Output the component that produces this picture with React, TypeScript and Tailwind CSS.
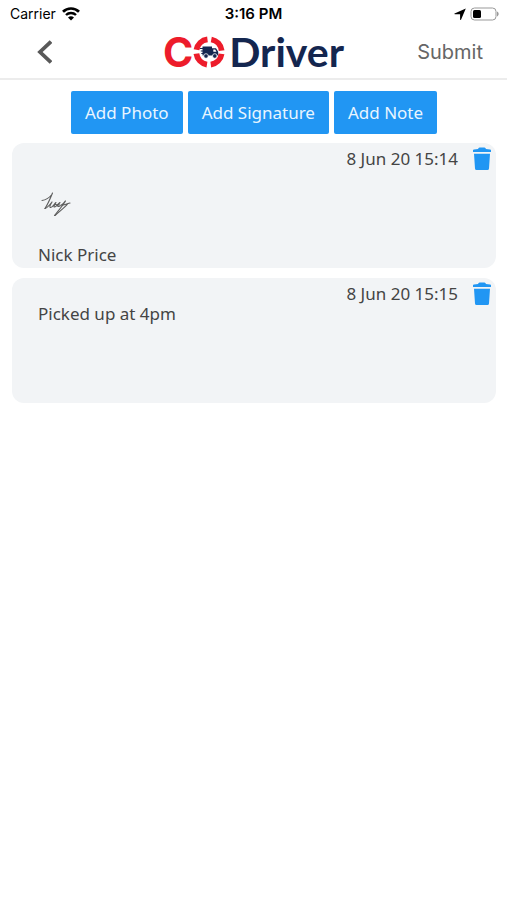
import type { ReactNode } from "react";

interface Entry {
  id: number;
  date: string;
  text: string;
  signed: boolean;
}

const ACTIONS = ["Add Photo", "Add Signature", "Add Note"];

const ENTRIES: Entry[] = [
  { id: 1, date: "8 Jun 20 15:14", text: "Nick Price", signed: true },
  { id: 2, date: "8 Jun 20 15:15", text: "Picked up at 4pm", signed: false },
];

function StatusBar() {
  return (
    <div className="grid h-7 grid-cols-3 items-center px-2 font-['Inter',sans-serif] text-sm text-black">
      <div className="flex items-center gap-1.5 pl-0.5">
        <span>Carrier</span>
        <svg className="h-3.5 w-[18px]" viewBox="0 0 18 14" fill="none">
          <path d="M1 4.8a11.3 11.3 0 0 1 16 0" stroke="#000" strokeWidth="2.7" />
          <path d="M4 8a7.1 7.1 0 0 1 10 0" stroke="#000" strokeWidth="2.4" />
          <path d="M9 13.6 6 10.6a4.3 4.3 0 0 1 6 0z" fill="#000" />
        </svg>
      </div>
      <span className="text-center text-[15px] font-semibold">3:16 PM</span>
      <div className="flex items-center justify-end gap-1">
        <svg className="h-3 w-3" viewBox="0 0 12 12">
          <path d="M11.8.4 7 11.7c-.2.4-.9.3-.9-.2V6.3H.8c-.6 0-.7-.7-.2-.9z" />
        </svg>
        <svg className="h-3.5 w-[29px]" viewBox="0 0 29 14">
          <rect x="1" y="1" width="25" height="12" rx="3.5" fill="none" stroke="#999" />
          <rect x="3" y="3" width="8" height="8" rx="1.5" />
          <path d="M27 4.6c2.2 1 2.2 3.8 0 4.8z" fill="#999" />
        </svg>
      </div>
    </div>
  );
}

function Logo() {
  return (
    <div className="flex items-center text-[41px] leading-10">
      <span className="font-['Inter',sans-serif] font-bold text-[#ed1c2b]">C</span>
      <svg className="h-8 w-8" viewBox="0 0 32 32" fill="none">
        <circle
          cx="16"
          cy="16"
          r="12.7"
          stroke="#ed1c2b"
          strokeWidth="5.8"
          strokeDasharray="16 3.95"
          strokeDashoffset="-1.97"
        />
        <path d="M9.5 10.5H19v9H9.5zM19 12.3h4l2.2 3.5v3.7H19z" fill="#14264f" />
        <path d="M7 12.5h4M7.8 15h3M8.3 17.5h2.5" stroke="#14264f" strokeWidth="1.2" />
        <path d="M20.3 13.6h1.9l1.3 2.2h-3.2z" fill="#fff" />
        <circle cx="13" cy="20" r="2.3" fill="#14264f" stroke="#fff" strokeWidth=".8" />
        <circle cx="21.8" cy="20" r="2.3" fill="#14264f" stroke="#fff" strokeWidth=".8" />
      </svg>
      <span className="ml-1 font-['Lato',sans-serif] font-bold text-[#14264f]">Driver</span>
    </div>
  );
}

function Header() {
  return (
    <header className="grid h-[52px] grid-cols-[1fr_auto_1fr] items-center border-b-2 border-[#ececec] px-6 pb-0.5">
      <button type="button" aria-label="Back" className="justify-self-start px-3">
        <svg className="h-6 w-4" viewBox="0 0 16 24" fill="none">
          <path d="M15 1.5 4 12l11 10.5" stroke="#595959" strokeWidth="3.8" />
        </svg>
      </button>
      <Logo />
      <button
        type="button"
        className="justify-self-end font-['Inter',sans-serif] text-xl text-[#666]"
      >
        Submit
      </button>
    </header>
  );
}

function Signature() {
  return (
    <svg
      className="h-7 w-8"
      viewBox="0 0 32 28"
      fill="none"
      stroke="#5c5c5c"
      strokeWidth="1.1"
      strokeLinecap="round"
      strokeLinejoin="round"
      role="img"
      aria-label="Signature"
    >
      <path d="M2 9.5C6 9 9 7 12 3.5M12.500 2C10.500 7 8.500 12 5 17.500" />
      <path d="M5 17.5c3-1 5-4 7-6.500-2.500 4-2.500 5.500-1.300 5.500 2 0 3.500-3.500 5.300-5-2 3-2.500 4.500-1.500 4.500 2 0 3-3 5.500-4.500-2.500 2.500-3 4-1.500 4 2.500 0 4.500-3 7-5.500-3 5-6.500 9-11 14.500" />
      <path d="M15 24.5c4-4 9-7 13-12M15 13.500l5 .5M22 13.500c2.500 1.500 6-1.500 8-1.500" />
    </svg>
  );
}

function TrashIcon() {
  return (
    <svg className="h-6 w-5" viewBox="0 0 20 24" fill="#2196f3">
      <path d="M1 3.2Q1 2.6 2 2.5L6 2q.5-1.5 1.5-1.5h5q1 0 1.500 1.500l4 .5q1 .1 1 .7V5H1zM2 6.800h16l-1 14.700q-.1 1.500-1.500 1.500h-11Q3.100 23 3 21.500z" />
    </svg>
  );
}

function Card({ date, children }: { date: string; children: ReactNode }) {
  return (
    <li className="flex h-[125px] flex-col rounded-xl bg-[#f2f4f6]">
      <div className="flex h-8 items-center justify-end gap-3.5 pr-1">
        <time>{date}</time>
        <button type="button" aria-label="Delete">
          <TrashIcon />
        </button>
      </div>
      <div className="flex grow flex-col px-[26px]">{children}</div>
    </li>
  );
}

export default function App() {
  return (
    <div className="min-h-screen bg-white">
      <StatusBar />
      <Header />
      <main className="pt-[11px] pr-[11px] pl-3 font-['Noto_Sans',sans-serif] text-[17px] leading-6 text-[#444]">
        <div className="flex justify-center gap-[5px]">
          {ACTIONS.map((label) => (
            <button
              key={label}
              type="button"
              className="h-[43px] rounded-xs bg-[#2196f3] px-3.5 text-[#e8f5ff]"
            >
              {label}
            </button>
          ))}
        </div>
        <ul className="mt-[9px] flex flex-col gap-[10px]">
          {ENTRIES.map((entry) => (
            <Card key={entry.id} date={entry.date}>
              {entry.signed && (
                <div className="pt-4 pb-8 pl-0.5">
                  <Signature />
                </div>
              )}
              <p className="-mt-2">{entry.text}</p>
            </Card>
          ))}
        </ul>
      </main>
    </div>
  );
}
